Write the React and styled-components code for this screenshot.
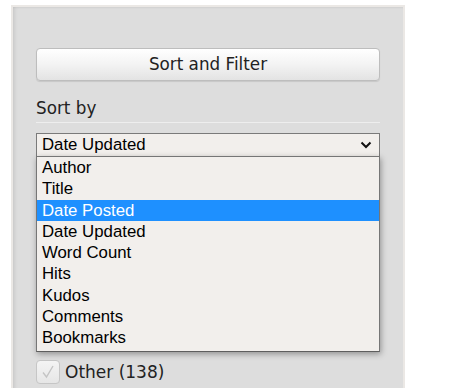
import React from "react";
import styled, { createGlobalStyle } from "styled-components";

const Global = createGlobalStyle`
  html, body { margin: 0; padding: 0; background: #fff; }
  body { font-family: "DejaVu Sans", "Liberation Sans", sans-serif; color: #2a2a2a; }
  * { box-sizing: border-box; }
`;

const Page = styled.div`
  width: 456px;
  height: 388px;
  overflow: hidden;
  padding: 5px 0 0 11px;
`;

const Panel = styled.div`
  width: 394px;
  height: 400px;
  background: #dddddd;
  border: 2px solid #ebe8e5;
  border-bottom: none;
  box-shadow: inset 3px 0 4px -2px rgba(0, 0, 0, 0.12), inset 0 2px 3px -2px rgba(0,0,0,0.08);
  padding: 41px 23px 0 23px;
  display: flex;
  flex-direction: column;
`;

const SubmitButton = styled.button`
  width: 344px;
  height: 33px;
  border: 1px solid #bdbdbd;
  border-radius: 4px;
  background: linear-gradient(#ffffff 0%, #f3f3f3 50%, #e3e3e3 100%);
  box-shadow: 0 1px 1px rgba(0,0,0,0.1);
  font-family: "DejaVu Sans", sans-serif;
  font-size: 16.8px;
  color: #222;
  padding: 0;
  line-height: 29px;
`;

const Heading = styled.h4`
  margin: 15px 0 0 0;
  font-weight: normal;
  font-size: 16.8px;
  line-height: 24px;
  padding-bottom: 2px;
  border-bottom: 1px solid #eeeeee;
  color: #222;
`;

const SelectWrap = styled.div`
  position: relative;
  margin-top: 10px;
  width: 344px;
`;

const SelectBox = styled.div`
  height: 24px;
  border: 1px solid #7a7a7a;
  background: #f2efec;
  font-family: "Liberation Sans", Arial, sans-serif;
  font-size: 16.8px;
  color: #000;
  display: flex;
  align-items: center;
  justify-content: space-between;
  padding: 0 7px 0 5px;
`;

const Menu = styled.ul`
  position: absolute;
  top: 23px;
  left: 0;
  width: 344px;
  margin: 0;
  padding: 0 0 2px 0;
  list-style: none;
  background: #f2efec;
  border: 1px solid #767676;
  border-bottom-color: #5e5e5e;
  box-shadow: 1px 2px 6px rgba(0,0,0,0.35);
  z-index: 2;
`;

const Option = styled.li`
  height: 21.3px;
  line-height: 21px;
  padding-left: 5px;
  font-family: "Liberation Sans", Arial, sans-serif;
  font-size: 16.8px;
  color: ${p => (p.$active ? "#fff" : "#000")};
  background: ${p => (p.$active ? "#1e90ff" : "transparent")};
`;

const Filters = styled.div`
  margin-top: 203px;
  display: flex;
  flex-direction: column;
`;

const CheckRow = styled.label`
  display: flex;
  align-items: center;
  gap: 5px;
  font-size: 17px;
  color: #222;
`;

const Box = styled.span`
  width: 24px;
  height: 24px;
  border: 1px solid #c6c6c6;
  border-radius: 4px;
  background: linear-gradient(#f4f4f4, #e6e6e6);
  display: flex;
  align-items: center;
  justify-content: center;
`;

const options = ["Author", "Title", "Date Posted", "Date Updated", "Word Count", "Hits", "Kudos", "Comments", "Bookmarks"];

export default function App() {
  return (
    <>
      <Global />
      <Page>
        <Panel>
          <SubmitButton>Sort and Filter</SubmitButton>
          <Heading>Sort by</Heading>
          <SelectWrap>
            <SelectBox>
              <span>Date Updated</span>
              <svg width="12" height="8" viewBox="0 0 12 8">
                <path d="M1.5 1.5 L6 6 L10.5 1.5" fill="none" stroke="#111" strokeWidth="2" />
              </svg>
            </SelectBox>
            <Menu>
              {options.map(o => (
                <Option key={o} $active={o === "Date Posted"}>{o}</Option>
              ))}
            </Menu>
          </SelectWrap>
          <Filters>
            <CheckRow>
              <Box>
                <svg width="16" height="16" viewBox="0 0 16 16">
                  <path d="M3 8.5 L6.5 13 L13 2" fill="none" stroke="#c4c4c4" strokeWidth="1.4" />
                </svg>
              </Box>
              Other (138)
            </CheckRow>
          </Filters>
        </Panel>
      </Page>
    </>
  );
}
